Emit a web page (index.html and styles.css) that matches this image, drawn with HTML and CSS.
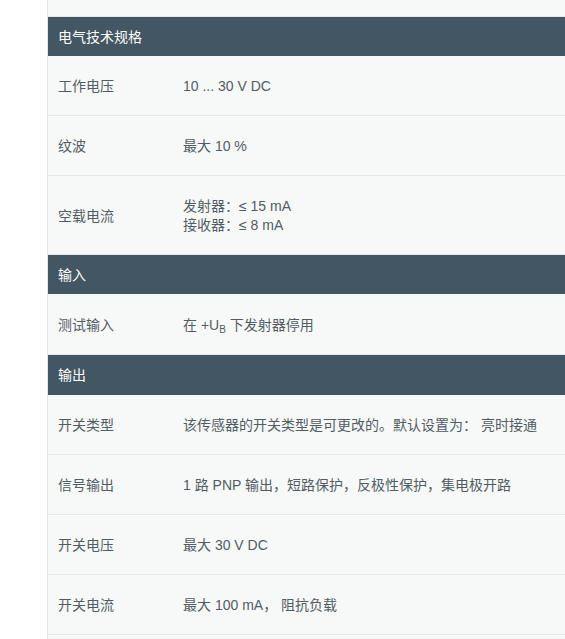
FILE: index.html
```html
<!DOCTYPE html>
<html lang="zh">
<head>
<meta charset="utf-8">
<link rel="stylesheet" href="styles.css">
</head>
<body>
<div class="panel">
  <div class="spacer"></div>
  <div class="head">电气技术规格</div>
  <div class="row"><div class="label">工作电压</div><div class="value">10 ... 30 V DC</div></div>
  <div class="row"><div class="label">纹波</div><div class="value">最大 10 %</div></div>
  <div class="row tall"><div class="label">空载电流</div><div class="value">发射器：≤ 15 mA<br>接收器：≤ 8 mA</div></div>
  <div class="head">输入</div>
  <div class="row mid"><div class="label">测试输入</div><div class="value">在 +U<sub class="sub">B</sub> 下发射器停用</div></div>
  <div class="head wide">输出</div>
  <div class="row"><div class="label">开关类型</div><div class="value">该传感器的开关类型是可更改的。默认设置为： 亮时接通</div></div>
  <div class="row"><div class="label">信号输出</div><div class="value">1 路 PNP 输出，短路保护，反极性保护，集电极开路</div></div>
  <div class="row"><div class="label">开关电压</div><div class="value">最大 30 V DC</div></div>
  <div class="row"><div class="label">开关电流</div><div class="value">最大 100 mA， 阻抗负载</div></div>
  <div class="row"><div class="label">&nbsp;</div><div class="value">&nbsp;</div></div>
</div>
</body>
</html>
```
FILE: styles.css
```css
html, body {
  margin: 0;
  padding: 0;
  background: #ffffff;
}
body {
  font-family: "Liberation Sans", "Noto Sans CJK SC", sans-serif;
  font-size: 14px;
  line-height: 19px;
  color: #525c63;
  overflow: hidden;
  height: 639px;
}
.panel {
  margin-left: 47px;
  border-left: 1px solid #e4e7e9;
  background: #f7f9f9;
  display: flex;
  flex-direction: column;
}
.spacer {
  height: 16px;
  border-bottom: 1px solid #e4e8ea;
  flex-shrink: 0;
}
.head {
  height: 39px;
  display: flex;
  align-items: center;
  padding-left: 10px;
  padding-top: 1px;
  box-sizing: border-box;
  background: #435663;
  color: #ffffff;
  flex-shrink: 0;
}
.head.wide {
  height: 40px;
}
.row {
  height: 59px;
  display: flex;
  align-items: center;
  border-bottom: 1px solid #e6e9eb;
  flex-shrink: 0;
}
.row > div {
  padding-top: 2px;
}
.row.tall {
  height: 78px;
}
.row.mid {
  height: 60px;
}
.label {
  width: 125px;
  padding-left: 10px;
  flex-shrink: 0;
}
.value {
  flex: 1;
}
.sub {
  font-size: 10px;
  line-height: 0;
  vertical-align: -3px;
}
```
